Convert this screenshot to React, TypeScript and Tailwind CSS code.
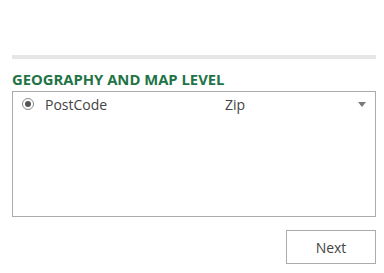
export default function App() {
  return (
    <div className="w-[384px] h-[273px] bg-white pt-[55px] px-[12px] pr-[8px]" style={{ fontFamily: '"Open Sans", "Noto Sans", sans-serif' }}>
      <div className="h-[4px] bg-[#e6e6e6]" />
      <div className="mt-[11px] text-[14.8px] leading-[18px] font-bold text-[#217346]">GEOGRAPHY AND MAP LEVEL</div>
      <div className="mt-[3px] h-[126px] border border-[#ababab]">
        <div className="flex items-center h-[22px] mt-[1px] text-[14px] text-[#444]">
          <div className="ml-[9px] w-[12px] h-[12px] rounded-full border border-[#8a8a8a] flex items-center justify-center">
            <div className="w-[6px] h-[6px] rounded-full bg-[#555]" />
          </div>
          <span className="ml-[11px] w-[180px]">PostCode</span>
          <span>Zip</span>
          <svg className="ml-auto mr-[9px]" width="8" height="5" viewBox="0 0 8 5">
            <path d="M0 0 H8 L4 5 Z" fill="#7a7a7a" />
          </svg>
        </div>
      </div>
      <div className="flex justify-end mt-[13px]">
        <button className="w-[90px] h-[34px] border border-[#ababab] bg-white text-[14px] text-[#444]">Next</button>
      </div>
    </div>
  );
}
